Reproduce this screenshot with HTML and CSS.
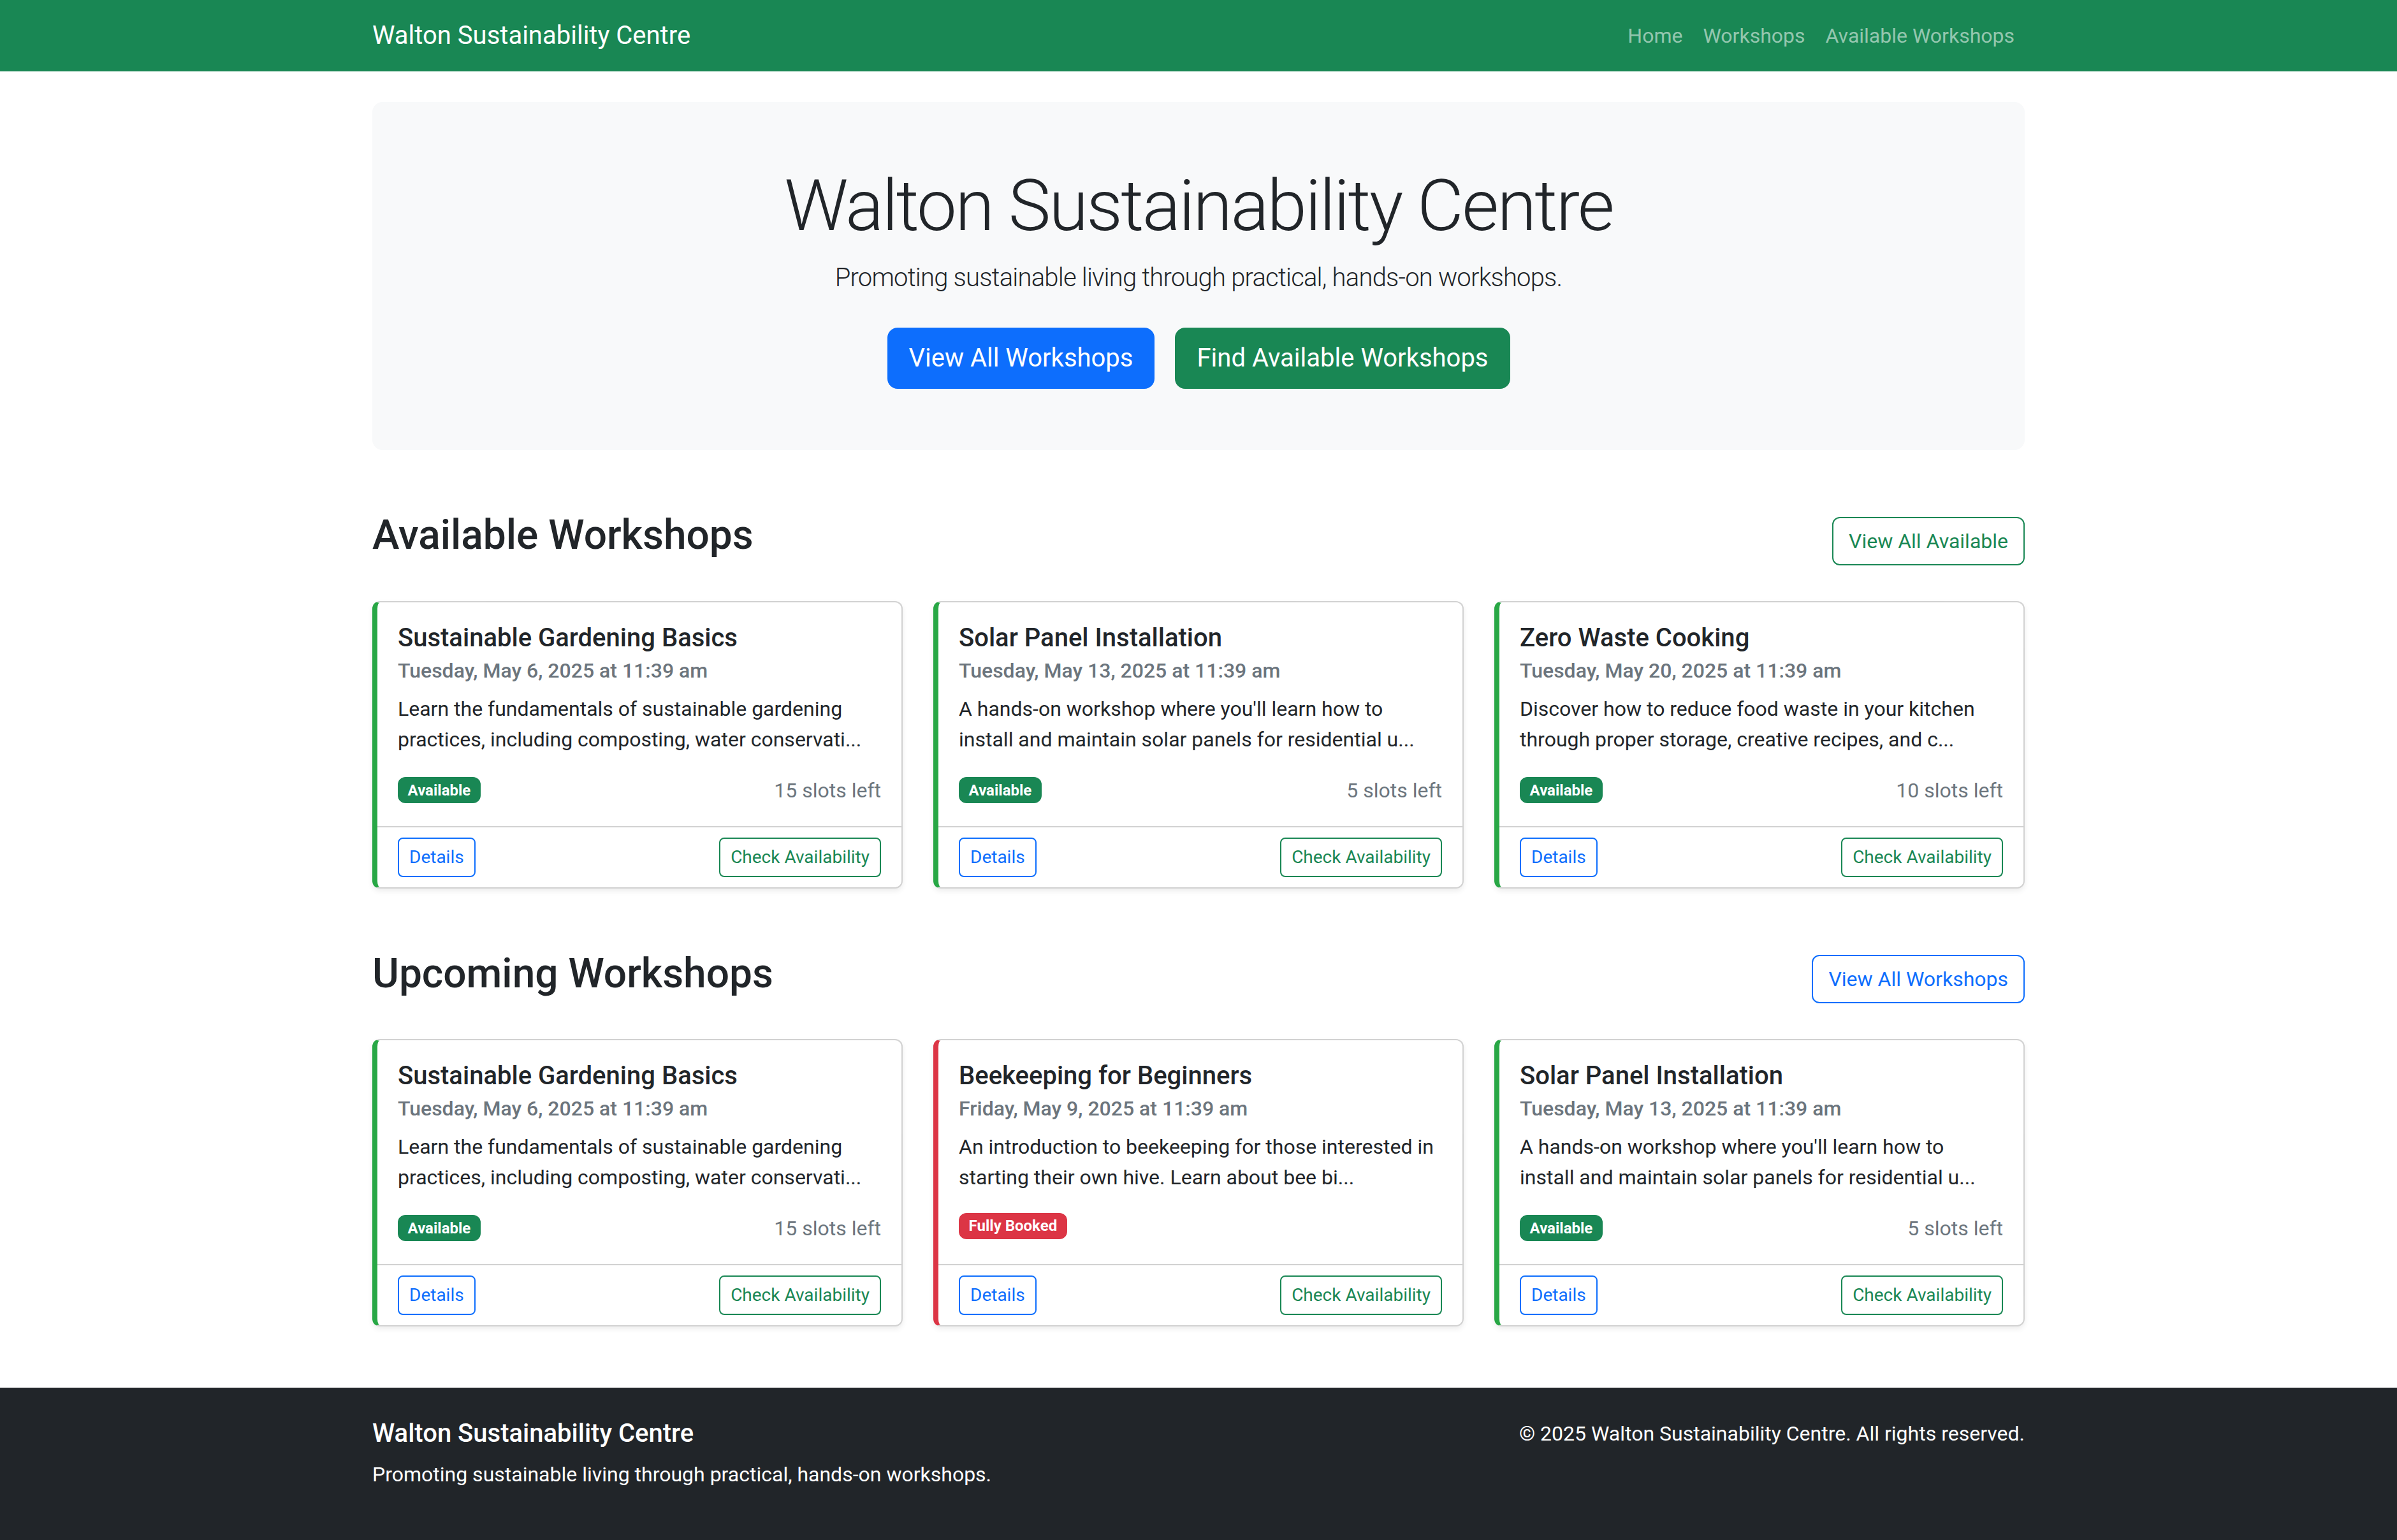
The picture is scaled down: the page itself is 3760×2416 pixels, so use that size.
FILE: index.html
```html
<!DOCTYPE html>
<html lang="en">
<head>
<meta charset="utf-8">
<title>Walton Sustainability Centre</title>
<link rel="stylesheet" href="styles.css">
</head>
<body>
<nav class="navbar">
  <div class="container nav-inner">
    <a class="brand" href="#">Walton Sustainability Centre</a>
    <ul class="nav-links">
      <li><a href="#">Home</a></li>
      <li><a href="#">Workshops</a></li>
      <li><a href="#">Available Workshops</a></li>
    </ul>
  </div>
</nav>

<main class="container main">
  <section class="hero">
    <h1 class="hero-title">Walton Sustainability Centre</h1>
    <p class="lead">Promoting sustainable living through practical, hands-on workshops.</p>
    <div class="hero-actions">
      <a class="btn btn-lg btn-primary" href="#">View All Workshops</a>
      <a class="btn btn-lg btn-success" href="#">Find Available Workshops</a>
    </div>
  </section>

  <section class="section">
    <div class="section-head">
      <h2 class="section-title">Available Workshops</h2>
      <a class="btn btn-outline-success" href="#">View All Available</a>
    </div>
    <div class="card-grid">
      <div class="card card-ok">
        <div class="card-body">
          <h5 class="card-title">Sustainable Gardening Basics</h5>
          <h6 class="card-subtitle">Tuesday, May 6, 2025 at 11:39 am</h6>
          <p class="card-text">Learn the fundamentals of sustainable gardening practices, including composting, water conservati...</p>
          <div class="card-meta">
            <span class="badge badge-success">Available</span>
            <span class="muted">15 slots left</span>
          </div>
        </div>
        <div class="card-footer">
          <a class="btn btn-sm btn-outline-primary" href="#">Details</a>
          <a class="btn btn-sm btn-outline-success" href="#">Check Availability</a>
        </div>
      </div>
      <div class="card card-ok">
        <div class="card-body">
          <h5 class="card-title">Solar Panel Installation</h5>
          <h6 class="card-subtitle">Tuesday, May 13, 2025 at 11:39 am</h6>
          <p class="card-text">A hands-on workshop where you'll learn how to install and maintain solar panels for residential u...</p>
          <div class="card-meta">
            <span class="badge badge-success">Available</span>
            <span class="muted">5 slots left</span>
          </div>
        </div>
        <div class="card-footer">
          <a class="btn btn-sm btn-outline-primary" href="#">Details</a>
          <a class="btn btn-sm btn-outline-success" href="#">Check Availability</a>
        </div>
      </div>
      <div class="card card-ok">
        <div class="card-body">
          <h5 class="card-title">Zero Waste Cooking</h5>
          <h6 class="card-subtitle">Tuesday, May 20, 2025 at 11:39 am</h6>
          <p class="card-text">Discover how to reduce food waste in your kitchen through proper storage, creative recipes, and c...</p>
          <div class="card-meta">
            <span class="badge badge-success">Available</span>
            <span class="muted">10 slots left</span>
          </div>
        </div>
        <div class="card-footer">
          <a class="btn btn-sm btn-outline-primary" href="#">Details</a>
          <a class="btn btn-sm btn-outline-success" href="#">Check Availability</a>
        </div>
      </div>
    </div>
  </section>

  <section class="section">
    <div class="section-head">
      <h2 class="section-title">Upcoming Workshops</h2>
      <a class="btn btn-outline-primary" href="#">View All Workshops</a>
    </div>
    <div class="card-grid">
      <div class="card card-ok">
        <div class="card-body">
          <h5 class="card-title">Sustainable Gardening Basics</h5>
          <h6 class="card-subtitle">Tuesday, May 6, 2025 at 11:39 am</h6>
          <p class="card-text">Learn the fundamentals of sustainable gardening practices, including composting, water conservati...</p>
          <div class="card-meta">
            <span class="badge badge-success">Available</span>
            <span class="muted">15 slots left</span>
          </div>
        </div>
        <div class="card-footer">
          <a class="btn btn-sm btn-outline-primary" href="#">Details</a>
          <a class="btn btn-sm btn-outline-success" href="#">Check Availability</a>
        </div>
      </div>
      <div class="card card-full">
        <div class="card-body">
          <h5 class="card-title">Beekeeping for Beginners</h5>
          <h6 class="card-subtitle">Friday, May 9, 2025 at 11:39 am</h6>
          <p class="card-text">An introduction to beekeeping for those interested in starting their own hive. Learn about bee bi...</p>
          <div class="card-meta">
            <span class="badge badge-danger">Fully Booked</span>
          </div>
        </div>
        <div class="card-footer">
          <a class="btn btn-sm btn-outline-primary" href="#">Details</a>
          <a class="btn btn-sm btn-outline-success" href="#">Check Availability</a>
        </div>
      </div>
      <div class="card card-ok">
        <div class="card-body">
          <h5 class="card-title">Solar Panel Installation</h5>
          <h6 class="card-subtitle">Tuesday, May 13, 2025 at 11:39 am</h6>
          <p class="card-text">A hands-on workshop where you'll learn how to install and maintain solar panels for residential u...</p>
          <div class="card-meta">
            <span class="badge badge-success">Available</span>
            <span class="muted">5 slots left</span>
          </div>
        </div>
        <div class="card-footer">
          <a class="btn btn-sm btn-outline-primary" href="#">Details</a>
          <a class="btn btn-sm btn-outline-success" href="#">Check Availability</a>
        </div>
      </div>
    </div>
  </section>
</main>

<footer class="footer">
  <div class="container footer-inner">
    <div class="footer-col">
      <h5 class="footer-title">Walton Sustainability Centre</h5>
      <p class="footer-text">Promoting sustainable living through practical, hands-on workshops.</p>
    </div>
    <div class="footer-col footer-right">
      <p class="footer-text">&copy; 2025 Walton Sustainability Centre. All rights reserved.</p>
    </div>
  </div>
</footer>
</body>
</html>
```

FILE: styles.css
```css
html {
  font-size: 32px;
}
* {
  box-sizing: border-box;
}
body {
  margin: 0;
  font-family: Roboto, "Open Sans", "Liberation Sans", sans-serif;
  font-size: 1rem;
  line-height: 1.5;
  color: #212529;
  background: #fff;
}
a {
  text-decoration: none;
}
h1, h2, h5, h6, p {
  margin-top: 0;
}
.container {
  width: 81rem;
  margin-left: auto;
  margin-right: auto;
}

/* navbar */
.navbar {
  background: #198754;
  padding: 0.5rem 0;
}
.nav-inner {
  display: flex;
  align-items: center;
  justify-content: space-between;
}
.brand {
  color: #fff;
  font-size: 1.25rem;
  padding: 0.3125rem 0;
  line-height: 1.5;
}
.nav-links {
  display: flex;
  list-style: none;
  margin: 0;
  padding: 0;
}
.nav-links a {
  display: block;
  padding: 0.5rem;
  color: rgba(255, 255, 255, 0.55);
}

/* main */
.main {
  margin-top: 1.5rem;
}
.hero {
  background: #f8f9fa;
  border-radius: 0.5rem;
  padding: 3rem;
  margin-bottom: 3rem;
  text-align: center;
}
.hero-title {
  font-size: 3.5rem;
  font-weight: 300;
  line-height: 1.2;
  letter-spacing: -0.024em;
  margin-bottom: 0.5rem;
}
.lead {
  font-size: 1.25rem;
  font-weight: 300;
  letter-spacing: -0.02em;
  margin-bottom: 1.5rem;
}
.hero-actions {
  display: flex;
  justify-content: center;
  gap: 1rem;
}

/* buttons */
.btn {
  display: inline-block;
  font-size: 1rem;
  line-height: 1.5;
  padding: 0.375rem 0.75rem;
  border: 2px solid transparent;
  border-radius: 0.375rem;
  text-align: center;
}
.btn-lg {
  font-size: 1.25rem;
  padding: 0.5rem 1rem;
  border-radius: 0.5rem;
}
.btn-sm {
  font-size: 0.875rem;
  padding: 0.25rem 0.5rem;
  border-radius: 0.25rem;
}
.btn-primary {
  background: #0d6efd;
  border-color: #0d6efd;
  color: #fff;
}
.btn-success {
  background: #198754;
  border-color: #198754;
  color: #fff;
}
.btn-outline-primary {
  color: #0d6efd;
  border-color: #0d6efd;
}
.btn-outline-success {
  color: #198754;
  border-color: #198754;
}

/* sections */
.section {
  margin-bottom: 3rem;
}
.section-head {
  display: flex;
  justify-content: space-between;
  align-items: center;
  margin-bottom: 1.5rem;
}
.section-title {
  font-size: 2rem;
  font-weight: 500;
  line-height: 1.2;
  margin-bottom: 0.5rem;
}
.card-grid {
  display: grid;
  grid-template-columns: repeat(3, 1fr);
  gap: 1.5rem;
}

/* cards */
.card {
  display: flex;
  flex-direction: column;
  background: #fff;
  border: 2px solid rgba(0, 0, 0, 0.175);
  border-radius: 0.375rem;
  box-shadow: 0 4px 8px rgba(0, 0, 0, 0.075);
}
.card-ok {
  border-left: 8px solid #28a745;
}
.card-full {
  border-left: 8px solid #dc3545;
}
.card-body {
  flex: 1 1 auto;
  padding: 1rem;
}
.card-title {
  font-size: 1.25rem;
  font-weight: 500;
  line-height: 1.2;
  margin-bottom: 0.5rem;
}
.card-subtitle {
  font-size: 1rem;
  font-weight: 500;
  line-height: 1.2;
  margin-top: -0.25rem;
  margin-bottom: 0.5rem;
  color: #6c757d;
}
.card-text {
  margin-bottom: 1rem;
}
.card-meta {
  display: flex;
  justify-content: space-between;
  align-items: center;
}
.muted {
  color: #6c757d;
}
.badge {
  display: inline-block;
  font-size: 0.75rem;
  font-weight: 700;
  line-height: 1;
  padding: 0.35em 0.65em;
  border-radius: 0.375rem;
  color: #fff;
}
.badge-success {
  background: #198754;
}
.badge-danger {
  background: #dc3545;
}
.card-footer {
  display: flex;
  justify-content: space-between;
  align-items: center;
  padding: 0.5rem 1rem;
  border-top: 2px solid rgba(0, 0, 0, 0.175);
}

/* footer */
.footer {
  background: #212529;
  color: #fff;
  padding: 1.5rem 0;
}
.footer-inner {
  display: flex;
}
.footer-col {
  flex: 1 1 0;
}
.footer-right {
  text-align: right;
}
.footer-title {
  font-size: 1.25rem;
  font-weight: 500;
  line-height: 1.2;
  margin-bottom: 0.5rem;
}
.footer-text {
  margin-bottom: 1rem;
}
```
